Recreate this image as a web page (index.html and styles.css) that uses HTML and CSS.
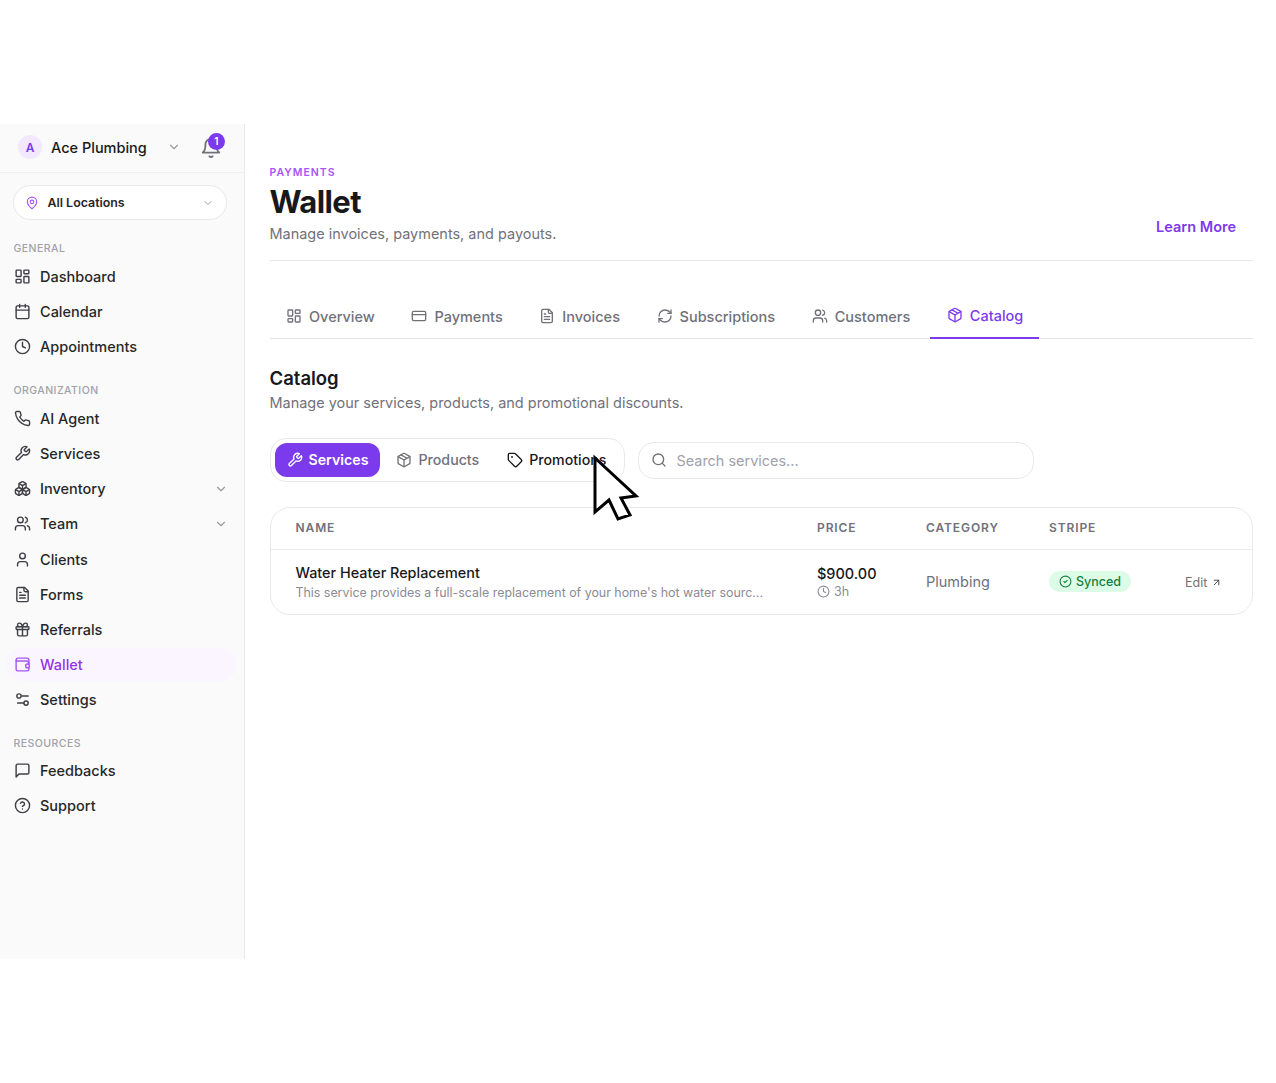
FILE: index.html
```html
<!DOCTYPE html>
<html lang="en">
<head>
    <meta charset="UTF-8">
    <meta name="viewport" content="width=device-width, initial-scale=1.0">
    <title>Wallet - Catalog</title>
    <link rel="stylesheet" href="styles.css">
</head>
<body>
    <!-- icon set -->
    <svg class="sprite" xmlns="http://www.w3.org/2000/svg">
        <symbol id="i-dashboard" viewBox="0 0 24 24"><rect x="3" y="3" width="7" height="9" rx="1"/><rect x="14" y="3" width="7" height="5" rx="1"/><rect x="14" y="12" width="7" height="9" rx="1"/><rect x="3" y="16" width="7" height="5" rx="1"/></symbol>
        <symbol id="i-calendar" viewBox="0 0 24 24"><path d="M8 2v4M16 2v4M3 10h18"/><rect x="3" y="4" width="18" height="18" rx="2"/></symbol>
        <symbol id="i-clock" viewBox="0 0 24 24"><circle cx="12" cy="12" r="10"/><path d="M12 6v6l4 2"/></symbol>
        <symbol id="i-phone" viewBox="0 0 24 24"><path d="M22 16.92v3a2 2 0 0 1-2.18 2 19.79 19.79 0 0 1-8.63-3.07 19.5 19.5 0 0 1-6-6 19.79 19.79 0 0 1-3.07-8.67A2 2 0 0 1 4.11 2h3a2 2 0 0 1 2 1.72 12.84 12.84 0 0 0 .7 2.81 2 2 0 0 1-.45 2.11L8.09 9.91a16 16 0 0 0 6 6l1.27-1.27a2 2 0 0 1 2.11-.45 12.84 12.84 0 0 0 2.81.7A2 2 0 0 1 22 16.92z"/></symbol>
        <symbol id="i-wrench" viewBox="0 0 24 24"><path d="M14.7 6.3a1 1 0 0 0 0 1.4l1.6 1.6a1 1 0 0 0 1.4 0l3.77-3.77a6 6 0 0 1-7.94 7.94l-6.91 6.91a2.12 2.12 0 0 1-3-3l6.91-6.91a6 6 0 0 1 7.94-7.94l-3.76 3.76z"/></symbol>
        <symbol id="i-boxes" viewBox="0 0 24 24"><path d="M2.97 12.92A2 2 0 0 0 2 14.63v3.24a2 2 0 0 0 .97 1.71l3 1.8a2 2 0 0 0 2.06 0L12 19v-5.5l-5-3-4.03 2.42Z"/><path d="m7 16.5-4.74-2.85M7 16.5l5-3M7 16.5v5.17"/><path d="M12 13.5V19l3.97 2.38a2 2 0 0 0 2.06 0l3-1.8a2 2 0 0 0 .97-1.71v-3.24a2 2 0 0 0-.97-1.71L17 10.5l-5 3Z"/><path d="m17 16.5-5-3M17 16.5l4.74-2.85M17 16.5v5.17"/><path d="M7.97 4.42A2 2 0 0 0 7 6.13v4.37l5 3 5-3V6.13a2 2 0 0 0-.97-1.71l-3-1.8a2 2 0 0 0-2.06 0l-3 1.8Z"/><path d="M12 8 7.26 5.15M12 8l4.74-2.85M12 13.5V8"/></symbol>
        <symbol id="i-users" viewBox="0 0 24 24"><path d="M16 21v-2a4 4 0 0 0-4-4H6a4 4 0 0 0-4 4v2"/><circle cx="9" cy="7" r="4"/><path d="M22 21v-2a4 4 0 0 0-3-3.87M16 3.13a4 4 0 0 1 0 7.75"/></symbol>
        <symbol id="i-user" viewBox="0 0 24 24"><path d="M19 21v-2a4 4 0 0 0-4-4H9a4 4 0 0 0-4 4v2"/><circle cx="12" cy="7" r="4"/></symbol>
        <symbol id="i-file" viewBox="0 0 24 24"><path d="M15 2H6a2 2 0 0 0-2 2v16a2 2 0 0 0 2 2h12a2 2 0 0 0 2-2V7Z"/><path d="M14 2v4a2 2 0 0 0 2 2h4M10 9H8M16 13H8M16 17H8"/></symbol>
        <symbol id="i-gift" viewBox="0 0 24 24"><rect x="3" y="8" width="18" height="4" rx="1"/><path d="M12 8v13M19 12v7a2 2 0 0 1-2 2H7a2 2 0 0 1-2-2v-7"/><path d="M7.5 8a2.5 2.5 0 0 1 0-5A4.8 8 0 0 1 12 8a4.8 8 0 0 1 4.5-5 2.5 2.5 0 0 1 0 5"/></symbol>
        <symbol id="i-wallet" viewBox="0 0 24 24"><path d="M21 11V6a3 3 0 0 0-3-3H6a3 3 0 0 0-3 3v13a2 2 0 0 0 2 2h14a2 2 0 0 0 2-2v-2"/><path d="M3 7h14a4 4 0 0 1 4 4"/><circle cx="19" cy="14" r="2.6"/></symbol>
        <symbol id="i-settings" viewBox="0 0 24 24"><path d="M20 7h-9M14 17H5"/><circle cx="17" cy="17" r="3"/><circle cx="7" cy="7" r="3"/></symbol>
        <symbol id="i-message" viewBox="0 0 24 24"><path d="M21 15a2 2 0 0 1-2 2H7l-4 4V5a2 2 0 0 1 2-2h14a2 2 0 0 1 2 2z"/></symbol>
        <symbol id="i-help" viewBox="0 0 24 24"><circle cx="12" cy="12" r="10"/><path d="M9.09 9a3 3 0 0 1 5.83 1c0 2-3 3-3 3M12 17h.01"/></symbol>
        <symbol id="i-pin" viewBox="0 0 24 24"><path d="M20 10c0 6-8 12-8 12s-8-6-8-12a8 8 0 0 1 16 0Z"/><circle cx="12" cy="10" r="3"/></symbol>
        <symbol id="i-bell" viewBox="0 0 24 24"><path d="M6 8a6 6 0 0 1 12 0c0 7 3 9 3 9H3s3-2 3-9"/><path d="M10.3 21a1.94 1.94 0 0 0 3.4 0"/></symbol>
        <symbol id="i-card" viewBox="0 0 24 24"><rect x="2" y="5" width="20" height="14" rx="2"/><path d="M2 10h20"/></symbol>
        <symbol id="i-refresh" viewBox="0 0 24 24"><path d="M3 12a9 9 0 0 1 9-9 9.75 9.75 0 0 1 6.74 2.74L21 8"/><path d="M21 3v5h-5"/><path d="M21 12a9 9 0 0 1-9 9 9.75 9.75 0 0 1-6.74-2.74L3 16"/><path d="M8 16H3v5"/></symbol>
        <symbol id="i-package" viewBox="0 0 24 24"><path d="M11 21.73a2 2 0 0 0 2 0l7-4A2 2 0 0 0 21 16V8a2 2 0 0 0-1-1.73l-7-4a2 2 0 0 0-2 0l-7 4A2 2 0 0 0 3 8v8a2 2 0 0 0 1 1.73z"/><path d="M12 22V12M3.29 7 12 12l8.71-5M7.5 4.27l9 5.15"/></symbol>
        <symbol id="i-tag" viewBox="0 0 24 24"><path d="M12.586 2.586A2 2 0 0 0 11.172 2H4a2 2 0 0 0-2 2v7.172a2 2 0 0 0 .586 1.414l8.704 8.704a2.426 2.426 0 0 0 3.42 0l6.58-6.58a2.426 2.426 0 0 0 0-3.42z"/><circle cx="7.5" cy="7.5" r=".5"/></symbol>
        <symbol id="i-search" viewBox="0 0 24 24"><circle cx="11" cy="11" r="8"/><path d="m21 21-4.3-4.3"/></symbol>
        <symbol id="i-check" viewBox="0 0 24 24"><circle cx="12" cy="12" r="10"/><path d="m9 12 2 2 4-4"/></symbol>
        <symbol id="i-arrow" viewBox="0 0 24 24"><path d="M7 7h10v10M7 17 17 7"/></symbol>
        <symbol id="i-chevron" viewBox="0 0 24 24"><path d="m6 9 6 6 6-6"/></symbol>
    </svg>

    <div class="app">
        <div class="sidebar">
            <div class="account">
                <span class="avatar">A</span>
                <span class="account-name">Ace Plumbing</span>
                <svg class="icon chevron account-chevron"><use href="#i-chevron"/></svg>
                <span class="bell">
                    <svg class="icon bell-icon"><use href="#i-bell"/></svg>
                    <span class="badge">1</span>
                </span>
            </div>

            <div class="location">
                <svg class="icon location-pin"><use href="#i-pin"/></svg>
                <span class="location-name">All Locations</span>
                <svg class="icon chevron location-chevron"><use href="#i-chevron"/></svg>
            </div>

            <div class="nav-title first">General</div>
            <a class="nav-link"><svg class="icon"><use href="#i-dashboard"/></svg>Dashboard</a>
            <a class="nav-link"><svg class="icon"><use href="#i-calendar"/></svg>Calendar</a>
            <a class="nav-link"><svg class="icon"><use href="#i-clock"/></svg>Appointments</a>

            <div class="nav-title">Organization</div>
            <a class="nav-link"><svg class="icon"><use href="#i-phone"/></svg>AI Agent</a>
            <a class="nav-link"><svg class="icon"><use href="#i-wrench"/></svg>Services</a>
            <a class="nav-link"><svg class="icon"><use href="#i-boxes"/></svg>Inventory<svg class="icon chevron nav-chevron"><use href="#i-chevron"/></svg></a>
            <a class="nav-link"><svg class="icon"><use href="#i-users"/></svg>Team<svg class="icon chevron nav-chevron"><use href="#i-chevron"/></svg></a>
            <a class="nav-link"><svg class="icon"><use href="#i-user"/></svg>Clients</a>
            <a class="nav-link"><svg class="icon"><use href="#i-file"/></svg>Forms</a>
            <a class="nav-link"><svg class="icon"><use href="#i-gift"/></svg>Referrals</a>
            <a class="nav-link active"><svg class="icon"><use href="#i-wallet"/></svg>Wallet</a>
            <a class="nav-link"><svg class="icon"><use href="#i-settings"/></svg>Settings</a>

            <div class="nav-title last">Resources</div>
            <a class="nav-link"><svg class="icon"><use href="#i-message"/></svg>Feedbacks</a>
            <a class="nav-link"><svg class="icon"><use href="#i-help"/></svg>Support</a>
        </div>

        <div class="content">
            <div class="page-header">
                <div>
                    <div class="eyebrow">Payments</div>
                    <h1>Wallet</h1>
                    <p class="page-sub">Manage invoices, payments, and payouts.</p>
                </div>
                <a class="learn-more">Learn More</a>
            </div>

            <div class="tabs">
                <a class="tab"><svg class="icon"><use href="#i-dashboard"/></svg>Overview</a>
                <a class="tab"><svg class="icon"><use href="#i-card"/></svg>Payments</a>
                <a class="tab"><svg class="icon"><use href="#i-file"/></svg>Invoices</a>
                <a class="tab"><svg class="icon"><use href="#i-refresh"/></svg>Subscriptions</a>
                <a class="tab"><svg class="icon"><use href="#i-users"/></svg>Customers</a>
                <a class="tab active"><svg class="icon"><use href="#i-package"/></svg>Catalog</a>
            </div>

            <h2>Catalog</h2>
            <p class="section-sub">Manage your services, products, and promotional discounts.</p>

            <div class="toolbar">
                <div class="segments">
                    <a class="segment active"><svg class="icon"><use href="#i-wrench"/></svg>Services</a>
                    <a class="segment"><svg class="icon"><use href="#i-package"/></svg>Products</a>
                    <a class="segment hover"><svg class="icon"><use href="#i-tag"/></svg>Promotions</a>
                </div>
                <div class="search">
                    <svg class="icon"><use href="#i-search"/></svg>
                    <span>Search services...</span>
                </div>
            </div>

            <div class="table-box">
                <table>
                    <thead>
                        <tr>
                            <th class="col-name">Name</th>
                            <th class="col-price">Price</th>
                            <th class="col-category">Category</th>
                            <th class="col-stripe">Stripe</th>
                            <th></th>
                        </tr>
                    </thead>
                    <tbody>
                        <tr>
                            <td>
                                <div class="service-name">Water Heater Replacement</div>
                                <div class="service-desc">This service provides a full-scale replacement of your home's hot water sourc...</div>
                            </td>
                            <td>
                                <div class="price">$900.00</div>
                                <div class="duration"><svg class="icon"><use href="#i-clock"/></svg>3h</div>
                            </td>
                            <td class="category">Plumbing</td>
                            <td><span class="synced"><svg class="icon"><use href="#i-check"/></svg>Synced</span></td>
                            <td><a class="edit">Edit<svg class="icon"><use href="#i-arrow"/></svg></a></td>
                        </tr>
                    </tbody>
                </table>
            </div>

            <!-- pointer from the screen recording -->
            <svg class="cursor" width="50" height="70" viewBox="0 0 50 70">
                <path d="M4 5 45 43 30 45 39 62 27 66 18 47 4 59Z"/>
            </svg>
        </div>
    </div>
</body>
</html>
```

FILE: styles.css
```css
* {
    box-sizing: border-box;
}
body {
    margin: 0;
    padding-top: 124px;
    font-family: Inter, "Liberation Sans", sans-serif;
    background-color: #fff;
    color: #18181b;
}
.sprite {
    display: none;
}
.icon {
    width: 16px;
    height: 16px;
    flex-shrink: 0;
    fill: none;
    stroke: currentColor;
    stroke-width: 2;
    stroke-linecap: round;
    stroke-linejoin: round;
}
.chevron {
    color: #9a9aa3;
}
.app {
    display: flex;
    height: 835px;
}

/* sidebar */
.sidebar {
    width: 245px;
    flex-shrink: 0;
    background-color: #fafafa;
    border-right: 1px solid #e9e9ec;
}
.account {
    display: flex;
    align-items: center;
    height: 49px;
    padding: 0 18px 2px;
    border-bottom: 1px solid #f0f0f2;
}
.avatar {
    display: flex;
    align-items: center;
    justify-content: center;
    width: 24px;
    height: 24px;
    border-radius: 50%;
    background-color: #f3e8ff;
    color: #7c3aed;
    font-size: 12px;
    font-weight: 600;
}
.account-name {
    margin-left: 9px;
    font-size: 14.5px;
    font-weight: 500;
}
.account-chevron {
    margin-left: 20px;
    width: 14px;
    height: 14px;
}
.bell {
    position: relative;
    margin-left: 19px;
    width: 22px;
    height: 24px;
    color: #71717a;
}
.bell-icon {
    width: 22px;
    height: 22px;
    margin-top: 2px;
}
.badge {
    position: absolute;
    top: -2px;
    right: -3px;
    width: 17px;
    height: 17px;
    border-radius: 50%;
    background-color: #7c3aed;
    color: #fff;
    font-size: 10px;
    font-weight: 600;
    line-height: 17px;
    text-align: center;
}
.location {
    display: flex;
    align-items: center;
    height: 35px;
    margin: 12px 17px 0 13px;
    padding: 0 12px 0 11px;
    background-color: #fff;
    border: 1px solid #e9e9ec;
    border-radius: 18px;
}
.location-pin {
    width: 14px;
    height: 14px;
    color: #a855f7;
}
.location-name {
    margin-left: 8.5px;
    font-size: 12.4px;
    font-weight: 600;
    color: #27272a;
}
.location-chevron {
    width: 12px;
    height: 12px;
    margin-left: auto;
}
.nav-title {
    margin: 21px 0 5px 13.5px;
    font-size: 10.5px;
    font-weight: 500;
    letter-spacing: 0.45px;
    line-height: 13px;
    text-transform: uppercase;
    color: #a1a1aa;
}
.nav-title.first {
    margin-top: 22px;
}
.nav-title.last {
    margin-bottom: 4px;
}
.nav-link {
    display: flex;
    align-items: center;
    gap: 9px;
    height: 33px;
    margin: 0 8px 2.1px 6px;
    padding: 0 8px;
    border-radius: 16px;
    font-size: 14.5px;
    font-weight: 500;
    color: #27272a;
}
.nav-link .icon {
    width: 17px;
    height: 17px;
    color: #3f3f46;
}
.nav-link.active {
    background-color: #faf5ff;
    color: #9333ea;
}
.nav-link.active .icon {
    color: #a855f7;
}
.nav-link .nav-chevron {
    width: 14px;
    height: 14px;
    margin-left: auto;
    color: #9a9aa3;
}

/* main area */
.content {
    position: relative;
    width: 983.5px;
    margin-left: 24.5px;
}
.page-header {
    display: flex;
    justify-content: space-between;
    align-items: flex-end;
    height: 137px;
    padding: 0 17px 16px 0;
    border-bottom: 1px solid #e9e9ec;
}
.eyebrow {
    font-size: 10.5px;
    font-weight: 600;
    letter-spacing: 1px;
    line-height: 13px;
    text-transform: uppercase;
    color: #a855f7;
}
h1 {
    margin: 5px 0 0;
    font-size: 31px;
    font-weight: 700;
    line-height: 36px;
    letter-spacing: -0.6px;
    color: #18181b;
}
.page-sub {
    margin: 4px 0 0;
    font-size: 14.47px;
    line-height: 20px;
    color: #71717a;
}
.learn-more {
    margin-bottom: 9px;
    font-size: 14.5px;
    font-weight: 600;
    color: #7c3aed;
}
.tabs {
    display: flex;
    gap: 4.1px;
    margin-top: 26px;
    height: 52px;
    border-bottom: 1px solid #e4e4e7;
}
.tab {
    display: flex;
    align-items: center;
    gap: 7px;
    height: 52px;
    padding: 6px 16px 0 16.5px;
    font-size: 14.5px;
    font-weight: 500;
    color: #71717a;
}
.tab.active {
    color: #7c3aed;
    border-bottom: 2px solid #7c3aed;
}
h2 {
    margin: 27px 0 0;
    font-size: 18.5px;
    font-weight: 600;
    line-height: 24px;
}
.section-sub {
    margin: 3px 0 0;
    font-size: 14.47px;
    line-height: 20px;
    color: #71717a;
}
.toolbar {
    display: flex;
    align-items: center;
    gap: 12.5px;
    margin-top: 25px;
}
.segments {
    display: flex;
    align-items: center;
    gap: 4px;
    width: 355.5px;
    height: 44px;
    padding: 0 4px;
    border: 1px solid #e9e9ec;
    border-radius: 16px;
}
.segment {
    display: flex;
    align-items: center;
    gap: 6px;
    height: 34px;
    padding: 0 12px 1px;
    border-radius: 12px;
    font-size: 14.2px;
    font-weight: 500;
    color: #71717a;
}
.segment.active {
    background-color: #7c3aed;
    color: #fff;
    font-weight: 600;
}
.segment.hover {
    color: #18181b;
}
.search {
    display: flex;
    align-items: center;
    gap: 10px;
    width: 396px;
    height: 37px;
    padding: 0 12px;
    border: 1px solid #e9e9ec;
    border-radius: 16px;
    font-size: 14.45px;
    color: #a1a1aa;
}
.search .icon {
    color: #71717a;
}
.table-box {
    margin-top: 25px;
    border: 1px solid #e9e9ec;
    border-radius: 20px;
    overflow: hidden;
}
table {
    width: 100%;
    border-collapse: collapse;
    table-layout: fixed;
}
th {
    height: 41px;
    padding: 0 0 2px;
    border-bottom: 1px solid #e9e9ec;
    font-size: 12px;
    font-weight: 600;
    letter-spacing: 0.9px;
    text-align: left;
    text-transform: uppercase;
    color: #71717a;
}
td {
    height: 65px;
    padding: 0;
    vertical-align: middle;
}
.col-name {
    width: 546.5px;
    padding-left: 25px;
}
.col-price {
    width: 109px;
}
.col-category {
    width: 123px;
}
.col-stripe {
    width: 136px;
}
td:first-child {
    padding-left: 25px;
}
.service-name {
    font-size: 14.4px;
    font-weight: 500;
    line-height: 20px;
}
.service-desc {
    margin-top: 2px;
    font-size: 12.4px;
    line-height: 16px;
    color: #8b8b94;
}
.price {
    font-size: 14.5px;
    font-weight: 500;
    line-height: 20px;
}
.duration {
    display: flex;
    align-items: center;
    gap: 4px;
    font-size: 12.5px;
    line-height: 16px;
    color: #8b8b94;
}
.duration .icon {
    width: 13px;
    height: 13px;
}
.category {
    font-size: 14.5px;
    color: #71717a;
}
.synced {
    display: inline-flex;
    align-items: center;
    gap: 4px;
    height: 21px;
    padding: 0 10px;
    border-radius: 11px;
    background-color: #dcfce7;
    color: #15803d;
    font-size: 12.5px;
    font-weight: 500;
}
.synced .icon {
    width: 13px;
    height: 13px;
}
.edit {
    display: inline-flex;
    align-items: center;
    gap: 4px;
    margin-bottom: 2px;
    font-size: 12.5px;
    color: #71717a;
}
.edit .icon {
    width: 11px;
    height: 11px;
    color: #3f3f46;
}
.cursor {
    position: absolute;
    top: 329px;
    left: 321px;
}
.cursor path {
    fill: #fff;
    stroke: #000;
    stroke-width: 3;
    stroke-linejoin: miter;
}
```
